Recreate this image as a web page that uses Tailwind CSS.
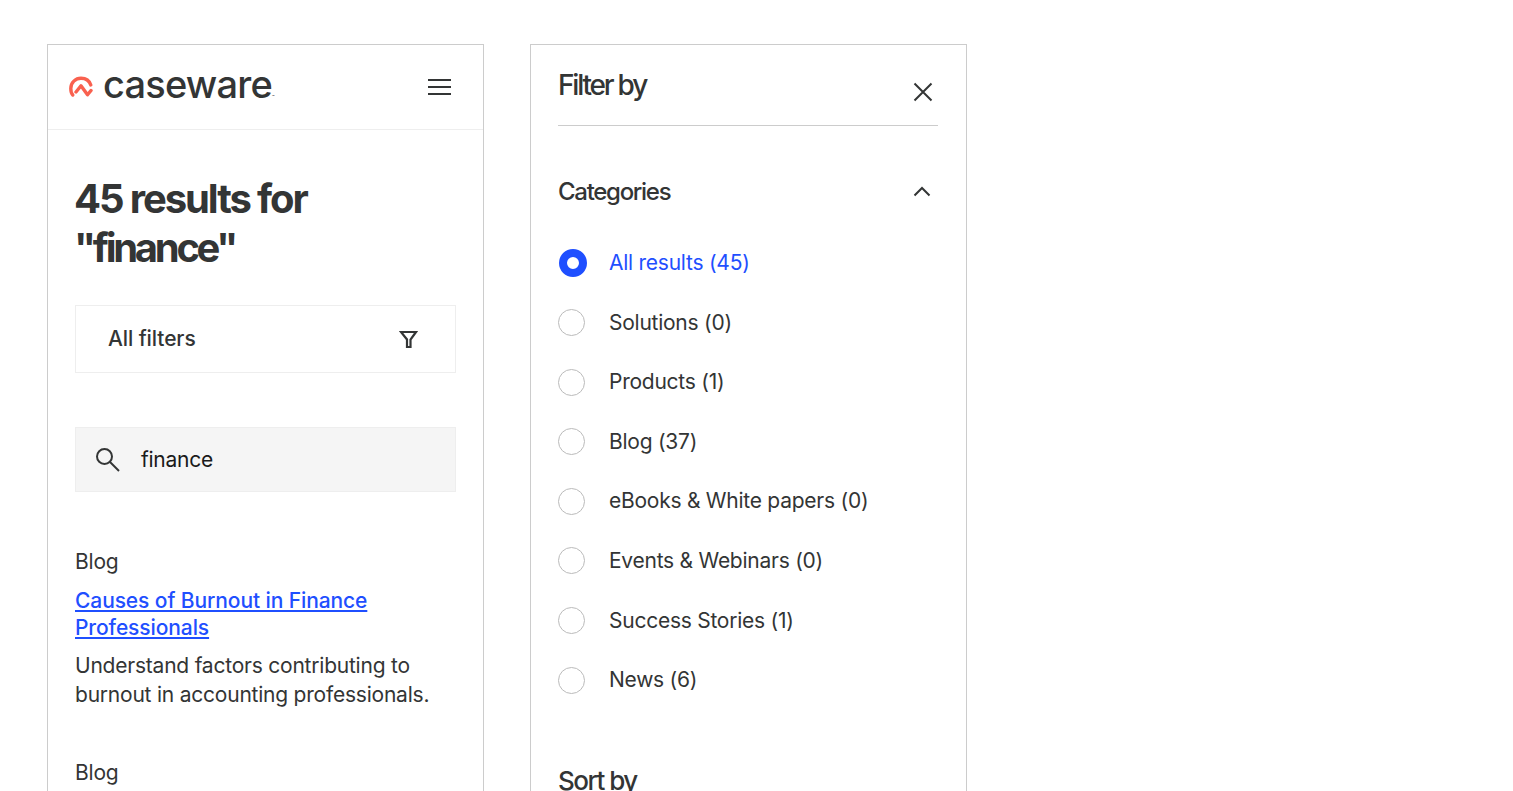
<!DOCTYPE html>
<html lang="en">
<head>
  <meta charset="UTF-8" />
  <title>Search results</title>
  <script src="https://cdn.jsdelivr.net/npm/@tailwindcss/browser@4"></script>
</head>
<body class="bg-white h-[791px] overflow-hidden font-['Inter',sans-serif] text-[#333535]">
  <div class="flex items-start gap-[46px] pl-[47px] pt-[44px]">

    <!-- Results panel -->
    <section class="w-[437px] h-[900px] shrink-0 border border-[#cccccc]">
      <header class="h-[85px] flex items-center justify-between pl-[21px] pr-[32px] border-b border-[#eeeeee]">
        <div class="flex items-center gap-[10px]">
          <svg class="w-[24px] h-[22px]" viewBox="0 0 24 22" fill="none" stroke="#f9614f" stroke-width="3.4" stroke-linecap="round" stroke-linejoin="round">
            <path d="M3.8 19C2.4 17.6 1.8 15.5 1.8 12.5C1.8 6.5 6.5 2.2 12 2.2C17 2.2 20.6 5.2 21.8 9" />
            <path d="M7 16L12 9.8L18.5 18.8L22 14.5" />
          </svg>
          <span class="text-[38px] leading-none font-medium tracking-[-0.8px] -mt-[7px]">caseware<span class="text-[4px] tracking-normal">™</span></span>
        </div>
        <svg class="w-[23px] h-[18px]" viewBox="0 0 23 18" fill="none" stroke="#333535" stroke-width="2">
          <path d="M0 2H23M0 9H23M0 16H23" />
        </svg>
      </header>

      <div class="px-[27px]">
        <h1 class="mt-[44px] -ml-px text-[40px] leading-[49px] font-bold tracking-[-2.1px]">45 results for<br /><span class="tracking-[-3.3px]">"finance"</span></h1>

        <button class="mt-[33px] w-full h-[68px] flex items-center justify-between pl-[32px] pr-[37px] border border-[#eeeeee]">
          <span class="text-[21px] font-medium tracking-[-0.1px]">All filters</span>
          <svg class="w-[19px] h-[19px]" viewBox="0 0 19 19" fill="none" stroke="#333535" stroke-width="2.2">
            <path d="M2 2H17L11.5 9.5V17H8V9.5Z" />
          </svg>
        </button>

        <div class="mt-[54px] h-[65px] flex items-center gap-[21px] pl-[19px] bg-[#f5f5f5] border border-[#eeeeee]">
          <svg class="w-[25px] h-[25px]" viewBox="0 0 25 25" fill="none" stroke="#333535" stroke-width="2">
            <circle cx="9.5" cy="9.5" r="7.5" />
            <path d="M15 15L24 24" />
          </svg>
          <span class="text-[21px] tracking-[-0.25px] text-[#1a1a1a]">finance</span>
        </div>

        <article class="mt-[53px]">
          <p class="text-[21px] leading-[34px] tracking-[-0.2px]">Blog</p>
          <a href="#" class="block mt-[8px] text-[21px] leading-[27px] font-medium tracking-[-0.1px] text-[#1f4fff] underline">Causes of Burnout in Finance Professionals</a>
          <p class="mt-[10px] text-[21px] leading-[29px] tracking-[-0.22px]">Understand factors contributing to burnout in accounting professionals.</p>
        </article>

        <article class="mt-[47px]">
          <p class="text-[21px] leading-[34px] tracking-[-0.2px]">Blog</p>
        </article>
      </div>
    </section>

    <!-- Filter panel -->
    <section class="w-[437px] h-[900px] shrink-0 border border-[#cccccc] pl-[27px] pr-[28px]">
      <div class="h-[81px] flex justify-between border-b border-[#cccccc]">
        <h2 class="mt-[20px] text-[28px] leading-[40px] font-medium tracking-[-2.2px]">Filter by</h2>
        <svg class="w-[20px] h-[20px] mt-[37px] mr-[5px]" viewBox="0 0 20 20" fill="none" stroke="#333535" stroke-width="2">
          <path d="M1.5 1.5L18.5 18.5M18.5 1.5L1.5 18.5" />
        </svg>
      </div>

      <div class="mt-[46px] h-[40px] flex items-center justify-between">
        <h3 class="text-[24px] font-medium tracking-[-1.3px]">Categories</h3>
        <svg class="w-[18px] h-[11px] mr-[7px] -mt-[2px]" viewBox="0 0 18 11" fill="none" stroke="#333535" stroke-width="2">
          <path d="M1.5 9.5L9 2L16.5 9.5" />
        </svg>
      </div>

      <ul class="mt-[36px] flex flex-col gap-[29.6px] text-[21px] leading-[30px] tracking-[-0.25px]">
        <li class="flex items-center gap-[22px] text-[#1f4fff]">
          <span class="w-[28px] h-[28px] ml-px rounded-full border-[8px] border-[#1f4fff]"></span>
          <span>All results (45)</span>
        </li>
        <li class="flex items-center gap-[24px]">
          <span class="w-[27px] h-[27px] rounded-full border border-[#bbbbbb]"></span>
          <span>Solutions (0)</span>
        </li>
        <li class="flex items-center gap-[24px]">
          <span class="w-[27px] h-[27px] rounded-full border border-[#bbbbbb]"></span>
          <span>Products (1)</span>
        </li>
        <li class="flex items-center gap-[24px]">
          <span class="w-[27px] h-[27px] rounded-full border border-[#bbbbbb]"></span>
          <span>Blog (37)</span>
        </li>
        <li class="flex items-center gap-[24px]">
          <span class="w-[27px] h-[27px] rounded-full border border-[#bbbbbb]"></span>
          <span>eBooks &amp; White papers (0)</span>
        </li>
        <li class="flex items-center gap-[24px]">
          <span class="w-[27px] h-[27px] rounded-full border border-[#bbbbbb]"></span>
          <span>Events &amp; Webinars (0)</span>
        </li>
        <li class="flex items-center gap-[24px]">
          <span class="w-[27px] h-[27px] rounded-full border border-[#bbbbbb]"></span>
          <span>Success Stories (1)</span>
        </li>
        <li class="flex items-center gap-[24px]">
          <span class="w-[27px] h-[27px] rounded-full border border-[#bbbbbb]"></span>
          <span>News (6)</span>
        </li>
      </ul>

      <h3 class="mt-[66px] text-[26px] leading-[40px] font-medium tracking-[-1.5px]">Sort by</h3>
    </section>
  </div>
</body>
</html>
